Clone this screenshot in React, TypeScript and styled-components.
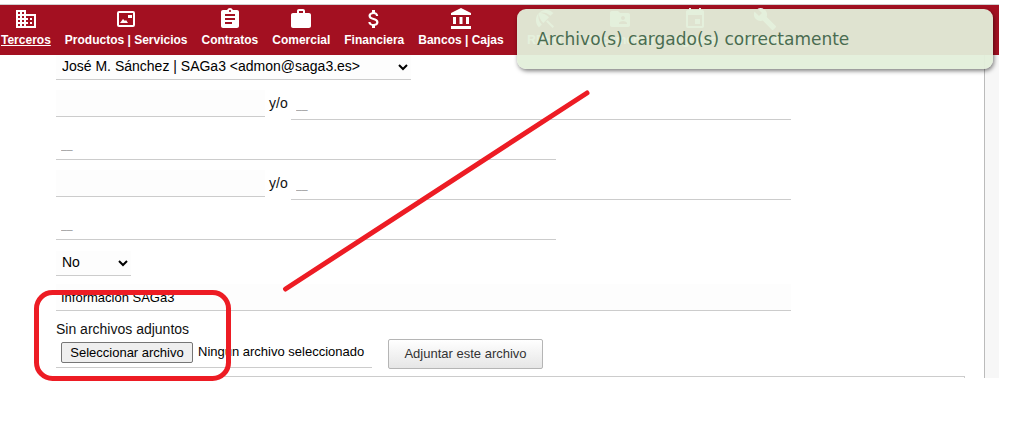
import React from "react";
import styled, { createGlobalStyle } from "styled-components";
import {
  MdBusiness,
  MdAssignment,
  MdWork,
  MdAttachMoney,
  MdAccountBalance,
  MdBeachAccess,
  MdFolderShared,
  MdEvent,
  MdBuild,
} from "react-icons/md";

const GlobalStyle = createGlobalStyle`
  *, *::before, *::after { box-sizing: border-box; }
  body {
    margin: 0;
    background: #fff;
    color: #111;
    font: 14px/20px "Liberation Sans", Arial, sans-serif;
  }
`;

const Page = styled.div`
  position: relative;
  min-height: 100vh;
  padding: 4px 27px 0 0;
`;

const Nav = styled.nav`
  display: flex;
  gap: 14px;
  height: 51px;
  padding: 2px 1px 0;
  overflow: hidden;
  background: #a31021;
  border-top: 1px solid #d0d0d0;
`;

const NavLink = styled.a<{ $active?: boolean }>`
  display: flex;
  flex-direction: column;
  align-items: center;
  min-width: 54px;
  color: #fff;
  font: bold 12px/19px "Liberation Sans", sans-serif;
  white-space: nowrap;
  text-decoration: ${(p) => (p.$active ? "underline" : "none")};
  &:first-child {
    min-width: 0;
  }
  svg {
    width: 24px;
    height: 24px;
    flex: none;
  }
`;

const Content = styled.main`
  margin-right: 14px;
  padding: 0 19px 0 56px;
  border-right: 1px solid #bbb;
`;

const Shell = styled.div`
  background: #f7f7f7;
  ${Content} {
    background: #fff;
  }
`;

const Row = styled.div<{ $height: number }>`
  display: flex;
  align-items: flex-end;
  height: ${(p) => p.$height}px;
`;

const Select = styled.select<{ $width: number }>`
  width: ${(p) => p.$width}px;
  max-width: 100%;
  height: 25px;
  padding: 0 3px 3px 2px;
  border: 0;
  border-bottom: 1px solid #ccc;
  border-radius: 0;
  background: #fdfdfd;
  color: #000;
  font: inherit;
`;

const Input = styled.input<{ $width: number; $plain?: boolean }>`
  width: ${(p) => p.$width}px;
  max-width: 100%;
  min-width: 0;
  height: 27px;
  padding: ${(p) => (p.$plain ? "0 5px 2px" : "0 5px")};
  border: 0;
  border-bottom: 1px solid #ccc;
  background: ${(p) => (p.$plain ? "#fff" : "#fdfdfd")};
  color: #000;
  font: 13px/20px ${(p) => (p.$plain ? "Roboto" : '"Liberation Sans"')}, sans-serif;
  &::placeholder {
    color: #aaa;
  }
`;

const Either = styled.label`
  display: flex;
  align-items: flex-end;
  min-width: 0;
  height: 30px;
  padding-left: 4px;
`;

const EitherText = styled.span`
  width: 22px;
  flex: none;
  padding-bottom: 7px;
`;

const Pair = styled.div`
  display: flex;
  align-items: flex-start;
  height: 40px;
  padding-top: 10px;
`;

const Status = styled.p`
  margin: 0;
  padding-top: 8px;
`;

const Attach = styled.div`
  display: flex;
  align-items: flex-start;
  gap: 16px;
  height: 37px;
`;

const FileField = styled.div`
  display: flex;
  align-items: center;
  gap: 5px;
  width: 316px;
  height: 29px;
  padding: 0 0 2px 5px;
  border-bottom: 1px solid #ccc;
  color: #000;
  font-size: 13px;
  white-space: nowrap;
`;

const FileInput = styled.input`
  position: absolute;
  width: 1px;
  height: 1px;
  opacity: 0;
`;

const FileLabel = styled.label`
  min-width: 132px;
  padding: 0 7px;
  border: 1px solid #767676;
  border-radius: 2px;
  background: #efefef;
  line-height: 19px;
  text-align: center;
`;

const AttachButton = styled.button`
  min-width: 155px;
  height: 30px;
  padding: 0 14px;
  border: 1px solid #b5b5b5;
  border-radius: 2px;
  background: linear-gradient(#fff, #e6e6e6);
  color: #333;
  font: 13px/20px "Liberation Sans", Arial, sans-serif;
  white-space: nowrap;
`;

const Panel = styled.div`
  height: 2px;
  border: 1px solid #ccc;
  border-width: 1px 1px 0 0;
`;

const Toast = styled.div`
  position: absolute;
  top: 9px;
  right: 33px;
  width: 476px;
  max-width: 90%;
  padding: 20px;
  border-radius: 9px;
  background: rgba(227, 239, 218, 0.95);
  box-shadow: 1px 2px 4px rgba(0, 0, 0, 0.5);
  color: #4a6c50;
  font: 17px/20px "DejaVu Sans", sans-serif;
`;

const Marks = styled.svg`
  position: absolute;
  top: 0;
  left: 0;
  pointer-events: none;
`;

const ProductIcon = () => (
  <svg viewBox="0 0 24 24" fill="currentColor" aria-hidden="true">
    <path d="M5 4h14a2 2 0 0 1 2 2v12a2 2 0 0 1-2 2H5a2 2 0 0 1-2-2V6a2 2 0 0 1 2-2zm0 2v12h14V6zm9 2h4v3h-4zM6 16l3-4 2 2 1-1 2 3z" />
  </svg>
);

const sections = [
  { label: "Terceros", Icon: MdBusiness },
  { label: "Productos | Servicios", Icon: ProductIcon },
  { label: "Contratos", Icon: MdAssignment },
  { label: "Comercial", Icon: MdWork },
  { label: "Financiera", Icon: MdAttachMoney },
  { label: "Bancos | Cajas", Icon: MdAccountBalance },
  { label: "RRHH", Icon: MdBeachAccess },
  { label: "Documental", Icon: MdFolderShared },
  { label: "Agenda", Icon: MdEvent },
  { label: "Utilidades", Icon: MdBuild },
];

const Recipients = ({ name }: { name: string }) => (
  <>
    <Pair>
      <Input $width={209} aria-label={name} />
      <Either>
        <EitherText>y/o</EitherText>
        <Input $width={500} $plain placeholder="__" />
      </Either>
    </Pair>
    <Row $height={40}>
      <Input $width={500} $plain placeholder="__" aria-label={`${name} (otros)`} />
    </Row>
  </>
);

export default function App() {
  return (
    <Page>
      <GlobalStyle />
      <Nav>
        {sections.map(({ label, Icon }, i) => (
          <NavLink key={label} href="#" $active={i === 0}>
            <Icon />
            {label}
          </NavLink>
        ))}
      </Nav>
      <Shell>
        <Content>
          <Row $height={25}>
            <Select $width={355} aria-label="Remitente">
              <option>José M. Sánchez | SAGa3 &lt;admon@saga3.es&gt;</option>
            </Select>
          </Row>
          <Recipients name="Para" />
          <Recipients name="Copia" />
          <Row $height={36}>
            <Select $width={75} aria-label="Confirmación">
              <option>No</option>
            </Select>
          </Row>
          <Row $height={35}>
            <Input $width={735} defaultValue="Información SAGa3" aria-label="Asunto" />
          </Row>
          <Status>Sin archivos adjuntos</Status>
          <Attach>
            <FileField>
              <FileInput type="file" id="adjunto" />
              <FileLabel htmlFor="adjunto">Seleccionar archivo</FileLabel>
              <span>Ningún archivo seleccionado</span>
            </FileField>
            <AttachButton type="button">Adjuntar este archivo</AttachButton>
          </Attach>
          <Panel />
        </Content>
      </Shell>
      <Toast role="status">Archivo(s) cargado(s) correctamente</Toast>
      <Marks width="600" height="390" fill="none" stroke="#ed1c24" strokeWidth="5" strokeLinecap="round" aria-hidden="true">
        <rect x="36.500" y="292.500" width="192" height="86" rx="16" />
        <path d="M285.500 289 587 93" />
      </Marks>
    </Page>
  );
}
